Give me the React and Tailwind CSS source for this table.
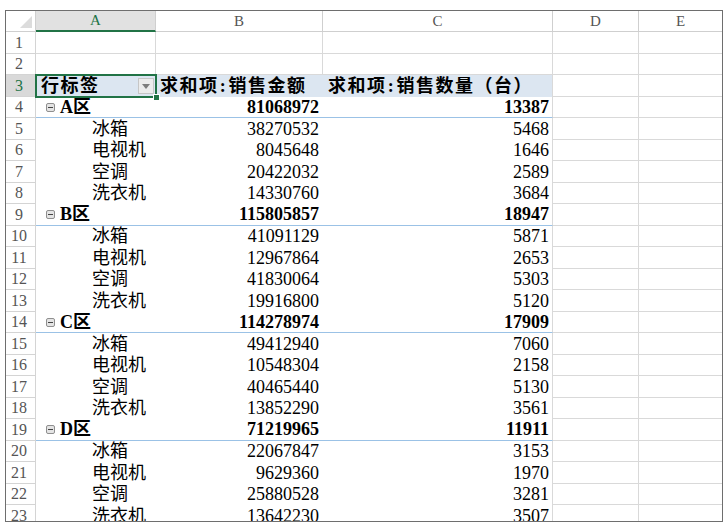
import React from 'react';

const data = [
  { zone: 'A', total: ['81068972', '13387'], items: [
    ['冰箱', '38270532', '5468'],
    ['电视机', '8045648', '1646'],
    ['空调', '20422032', '2589'],
    ['洗衣机', '14330760', '3684'],
  ] },
  { zone: 'B', total: ['115805857', '18947'], items: [
    ['冰箱', '41091129', '5871'],
    ['电视机', '12967864', '2653'],
    ['空调', '41830064', '5303'],
    ['洗衣机', '19916800', '5120'],
  ] },
  { zone: 'C', total: ['114278974', '17909'], items: [
    ['冰箱', '49412940', '7060'],
    ['电视机', '10548304', '2158'],
    ['空调', '40465440', '5130'],
    ['洗衣机', '13852290', '3561'],
  ] },
  { zone: 'D', total: ['71219965', '11911'], items: [
    ['冰箱', '22067847', '3153'],
    ['电视机', '9629360', '1970'],
    ['空调', '25880528', '3281'],
    ['洗衣机', '13642230', '3507'],
  ] },
];

// flatten into sheet rows (row 1..23)
const rows = [{ type: 'blank' }, { type: 'blank' }, { type: 'head' }];
data.forEach((g) => {
  rows.push({ type: 'group', label: g.zone, b: g.total[0], c: g.total[1] });
  g.items.forEach(([name, b, c]) => rows.push({ type: 'item', label: name, b, c }));
});

const grid = 'border-[#d9d9d9]';

function Collapse() {
  return (
    <span className="w-[9px] h-[9px] rounded-[2px] border border-[#8f8f8f] bg-[#e4e4e4] flex items-center justify-center shrink-0">
      <span className="w-[5px] h-px bg-[#444]" />
    </span>
  );
}

function Colon() {
  return <span className="inline-block w-[10px] text-center">:</span>;
}

function HeaderRow() {
  const cols = [
    ['B', 'w-[167px]'],
    ['C', 'w-[230px]'],
    ['D', 'w-[86px]'],
  ];
  return (
    <div className="flex h-[21px] text-[15px] text-[#555]">
      <div className="w-[30px] relative border-r border-b border-[#cfcfcf]">
        <svg className="absolute right-[3px] bottom-[3px]" width="12" height="12" viewBox="0 0 12 12">
          <polygon points="12,0 12,12 0,12" fill="#dcdcdc" />
        </svg>
      </div>
      <div className="w-[120px] flex items-center justify-center bg-[#e1e1e1] border-r border-[#cfcfcf] border-b-2 border-b-[#217346] text-[#217346]">
        A
      </div>
      {cols.map(([l, w]) => (
        <div key={l} className={`${w} flex items-center justify-center border-r border-b border-[#cfcfcf]`}>
          {l}
        </div>
      ))}
      <div className="w-[83px] flex items-center justify-center border-b border-[#cfcfcf]">E</div>
    </div>
  );
}

function SheetRow({ row, n }) {
  const h = n % 2 === 1 ? 'h-[22px]' : 'h-[21px]';
  const sel = n === 3;

  let a, b, c;
  if (row.type === 'blank') {
    a = <div className={`w-[120px] border-r border-b ${grid}`} />;
    b = <div className={`w-[167px] border-r border-b ${grid}`} />;
    c = <div className={`w-[230px] border-r border-b ${grid}`} />;
  } else if (row.type === 'head') {
    a = (
      <div className="w-[120px] relative bg-[#dce6f1] flex items-center pl-[5px] font-bold">
        <span className="tracking-[1.5px]">行标签</span>
        <span className="ml-auto mr-[2px] w-[16px] h-[16px] bg-[#ececec] border border-[#c6c6c6] flex items-center justify-center">
          <svg width="8" height="5" viewBox="0 0 8 5"><polygon points="0,0 8,0 4,5" fill="#7d7d7d" /></svg>
        </span>
        <div className="absolute z-10 -left-px -top-px -right-px -bottom-px border-2 border-[#217346]" />
        <div className="absolute z-20 right-[-4px] bottom-[-4px] w-[7px] h-[7px] bg-[#217346] border border-white" />
      </div>
    );
    b = (
      <div className="w-[167px] bg-[#dce6f1] flex items-center pl-[4px] font-bold whitespace-nowrap tracking-[1.5px]">
        求和项<Colon />销售金额
      </div>
    );
    c = (
      <div className={`w-[230px] bg-[#dce6f1] border-r ${grid} flex items-center pl-[5px] font-bold whitespace-nowrap tracking-[1.5px]`}>
        求和项<Colon />销售数量（台）
      </div>
    );
  } else if (row.type === 'group') {
    a = (
      <div className="w-[120px] border-b border-[#9bc2e6] flex items-center pl-[10px] gap-[5px] font-bold">
        <Collapse />
        <span>{row.label}区</span>
      </div>
    );
    b = <div className="w-[167px] border-b border-[#9bc2e6] flex items-center justify-end pr-[4px] font-bold">{row.b}</div>;
    c = <div className={`w-[230px] border-b border-b-[#9bc2e6] border-r ${grid} flex items-center justify-end pr-[3px] font-bold`}>{row.c}</div>;
  } else {
    a = <div className="w-[120px] flex items-center pl-[56px]">{row.label}</div>;
    b = <div className="w-[167px] flex items-center justify-end pr-[4px]">{row.b}</div>;
    c = <div className={`w-[230px] border-r ${grid} flex items-center justify-end pr-[3px]`}>{row.c}</div>;
  }

  return (
    <div className={`flex ${h} shrink-0 text-[18px] text-black`}>
      <div
        className={`w-[30px] flex items-center justify-center pr-[3px] border-r border-b border-[#d4d4d4] text-[16px] ${
          sel ? 'bg-[#d9d9d9] text-[#217346]' : 'text-[#555]'
        }`}
      >
        {n}
      </div>
      {a}
      {b}
      {c}
      <div className={`w-[86px] border-r border-b ${grid}`} />
      <div className={`w-[83px] border-b ${grid}`} />
    </div>
  );
}

export default function App() {
  return (
    <div className="w-[726px] h-[532px] bg-white pt-[10px] pl-[5px] overflow-hidden font-['Liberation_Serif','Noto_Sans_CJK_SC',serif]">
      <div className="w-[718px] h-[512px] border border-[#6e6e6e] overflow-hidden flex flex-col">
        <HeaderRow />
        {rows.map((r, i) => (
          <SheetRow key={i} row={r} n={i + 1} />
        ))}
      </div>
    </div>
  );
}
